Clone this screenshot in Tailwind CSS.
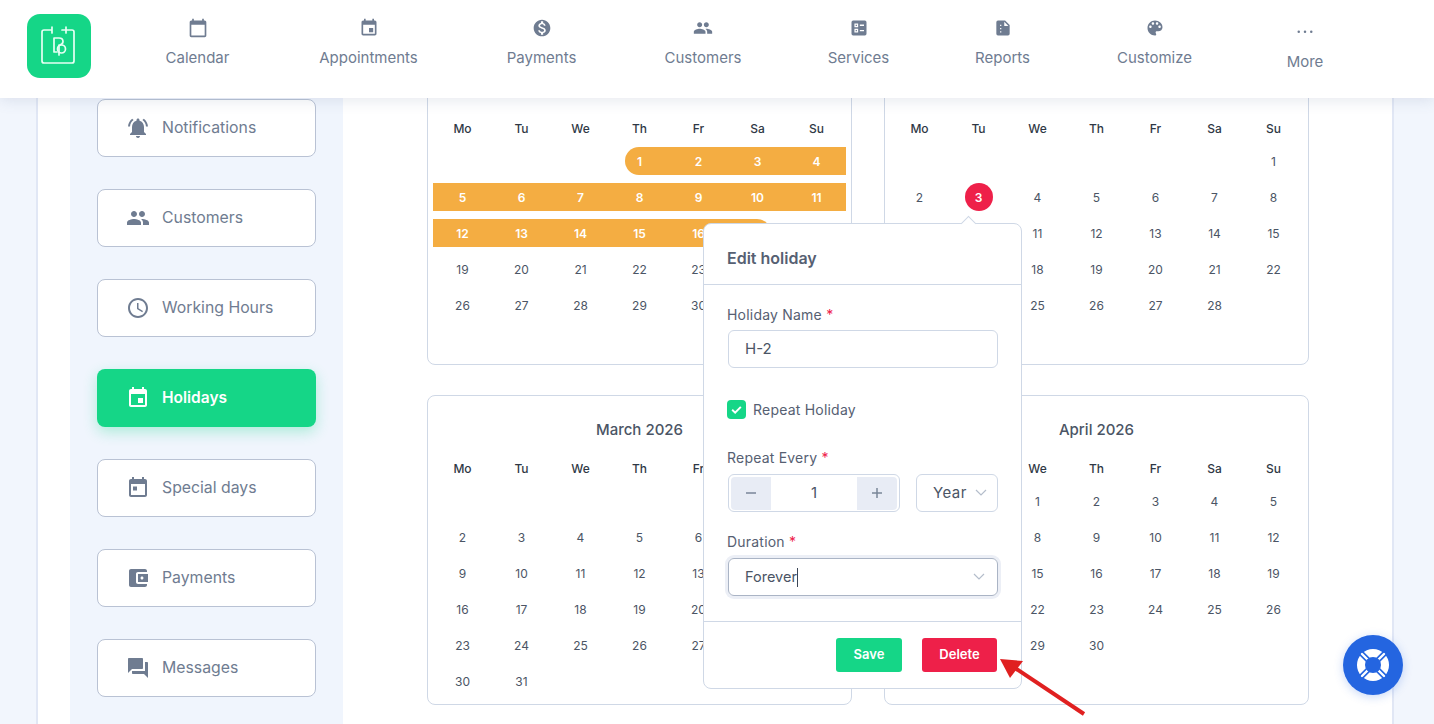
<!DOCTYPE html>
<html lang="en">
<head>
  <meta charset="UTF-8">
  <meta name="viewport" content="width=device-width, initial-scale=1.0">
  <title>Holidays</title>
  <script src="https://cdn.jsdelivr.net/npm/@tailwindcss/browser@4"></script>
</head>
<body class="bg-[#f2f6fd] font-['Inter',sans-serif] h-[724px] overflow-hidden relative">

  <!-- Top navigation -->
  <header class="relative z-30 h-[98px] bg-white shadow-[0_2px_14px_rgba(90,105,140,0.16)] flex pl-[27px] pt-[14px]">
    <div class="w-[64px] h-[64px] rounded-[13px] bg-[#15d687] flex items-center justify-center shrink-0">
      <svg class="w-[40px] h-[44px]" viewBox="0 0 40 44" fill="none" stroke="#e6fff4" stroke-width="1.700" stroke-linecap="round" stroke-linejoin="round">
        <path d="M13 6H5Q3 6 3 8V37Q3 39 5 39H33Q35 39 35 37V8Q35 6 33 6H23M13 3V9M27 3V9"/>
        <path d="M15 28V14H20Q24 14 24 17.500Q24 20 21 21M15 28H18"/><path d="M20 31V21"/><circle cx="22.500" cy="25" r="4"/>
      </svg>
    </div>
    <nav class="flex ml-[29.5px] text-[#6f7c91] text-[15px]">
      <a class="w-[154px] h-[62px] flex flex-col items-center pt-[4px]">
        <svg class="w-5 h-5 fill-[#6f7c91]" viewBox="0 0 24 24"><path d="M20 3h-1V1h-2v2H7V1H5v2H4c-1.100 0-2 .9-2 2v16c0 1.100.9 2 2 2h16c1.100 0 2-.9 2-2V5c0-1.100-.9-2-2-2zm0 18H4V8h16v13z"/></svg>
        <span class="mt-[9px] leading-[22px]">Calendar</span>
      </a>
      <a class="w-[188px] h-[62px] flex flex-col items-center pt-[4px]">
        <svg class="w-5 h-5 fill-[#6f7c91]" viewBox="0 0 24 24"><path d="M17 12h-5v5h5v-5zM16 1v2H8V1H6v2H5c-1.110 0-1.990.9-1.990 2L3 19c0 1.100.89 2 2 2h14c1.100 0 2-.9 2-2V5c0-1.100-.9-2-2-2h-1V1h-2zm3 18H5V8h14v11z"/></svg>
        <span class="mt-[9px] leading-[22px]">Appointments</span>
      </a>
      <a class="w-[158px] h-[62px] flex flex-col items-center pt-[4px]">
        <svg class="w-5 h-5 fill-[#6f7c91]" viewBox="0 0 24 24"><path d="M12 2C6.480 2 2 6.480 2 12s4.480 10 10 10 10-4.480 10-10S17.520 2 12 2zm1.410 16.090V20h-2.670v-1.930c-1.710-.36-3.160-1.460-3.270-3.400h1.960c.1 1.050.82 1.870 2.650 1.870 1.960 0 2.400-.98 2.400-1.590 0-.83-.44-1.610-2.670-2.140-2.480-.6-4.180-1.620-4.180-3.670 0-1.720 1.390-2.840 3.110-3.210V4h2.670v1.950c1.860.45 2.790 1.860 2.850 3.390H14.300c-.05-1.110-.64-1.870-2.220-1.870-1.500 0-2.400.68-2.400 1.640 0 .84.65 1.390 2.670 1.910s4.180 1.390 4.180 3.910c-.01 1.830-1.380 2.830-3.120 3.160z"/></svg>
        <span class="mt-[9px] leading-[22px]">Payments</span>
      </a>
      <a class="w-[165px] h-[62px] flex flex-col items-center pt-[4px]">
        <svg class="w-5 h-5 fill-[#6f7c91]" viewBox="0 0 24 24"><path d="M16 11c1.660 0 2.990-1.340 2.990-3S17.660 5 16 5c-1.660 0-3 1.340-3 3s1.340 3 3 3zm-8 0c1.660 0 2.990-1.340 2.990-3S9.660 5 8 5C6.340 5 5 6.340 5 8s1.340 3 3 3zm0 2c-2.330 0-7 1.170-7 3.500V19h14v-2.500c0-2.330-4.670-3.500-7-3.500zm8 0c-.29 0-.62.02-.97.05 1.160.84 1.970 1.970 1.970 3.450V19h6v-2.500c0-2.330-4.670-3.500-7-3.500z"/></svg>
        <span class="mt-[9px] leading-[22px]">Customers</span>
      </a>
      <a class="w-[146px] h-[62px] flex flex-col items-center pt-[4px]">
        <svg class="w-5 h-5 fill-[#6f7c91]" viewBox="0 0 24 24"><path fill-rule="evenodd" d="M5 3h14a2 2 0 0 1 2 2v14a2 2 0 0 1-2 2H5a2 2 0 0 1-2-2V5a2 2 0 0 1 2-2zm1.500 3.500v4.500h4.500V6.500zm1.500 1.500h1.500v1.500H8zM13 7.800v1.700h5V7.800zM6.500 13v4.500h4.500V13zM8 14.500h1.500V16H8zM13 14.300V16h5v-1.700z"/></svg>
        <span class="mt-[9px] leading-[22px]">Services</span>
      </a>
      <a class="w-[142px] h-[62px] flex flex-col items-center pt-[4px]">
        <svg class="w-5 h-5 fill-[#6f7c91]" viewBox="0 0 24 24"><path fill-rule="evenodd" d="M6 3h8.500L20 8.500V19a2 2 0 0 1-2 2H6a2 2 0 0 1-2-2V5a2 2 0 0 1 2-2zm7.500 1.500V9.500H18.500zM8.500 8v1.500H10V8zM8.500 12v1.500H10V12zM8.500 16v1.500H10V16z"/></svg>
        <span class="mt-[9px] leading-[22px]">Reports</span>
      </a>
      <a class="w-[162px] h-[62px] flex flex-col items-center pt-[4px]">
        <svg class="w-5 h-5 fill-[#6f7c91]" viewBox="0 0 24 24"><path d="M12 3c-4.970 0-9 4.030-9 9s4.030 9 9 9c.83 0 1.500-.67 1.500-1.500 0-.39-.15-.74-.39-1.010-.23-.26-.38-.61-.38-.99 0-.83.67-1.500 1.500-1.500H16c2.760 0 5-2.240 5-5 0-4.420-4.030-8-9-8zm-5.500 9c-.83 0-1.500-.67-1.500-1.500S5.670 9 6.500 9 8 9.670 8 10.500 7.330 12 6.500 12zm3-4C8.670 8 8 7.330 8 6.500S8.670 5 9.500 5s1.500.67 1.500 1.500S10.330 8 9.500 8zm5 0c-.83 0-1.500-.67-1.500-1.500S13.670 5 14.500 5s1.500.67 1.500 1.500S15.330 8 14.500 8zm3 4c-.83 0-1.500-.67-1.500-1.500S16.670 9 17.500 9s1.500.67 1.500 1.500-.67 1.500-1.500 1.500z"/></svg>
        <span class="mt-[9px] leading-[22px]">Customize</span>
      </a>
      <a class="w-[139px] h-[62px] flex flex-col items-center pt-[7px]">
        <svg class="w-5 h-5 fill-[#6f7c91]" viewBox="0 0 24 24"><circle cx="4.500" cy="13" r="1.500"/><circle cx="12" cy="13" r="1.500"/><circle cx="19.500" cy="13" r="1.500"/></svg>
        <span class="mt-[10px] leading-[22px]">More</span>
      </a>
    </nav>
  </header>

  <!-- Page body, scrolled under the header -->
  <main class="relative ml-[36px] w-[1358px] h-[626px] bg-white border-x-2 border-[#e1e7f5] flex overflow-hidden">
    <!-- Settings sidebar -->
    <aside class="ml-[32px] w-[273px] h-full bg-[#f0f5fd] pl-[27px] pt-[1px] flex flex-col gap-[32px] text-[15.8px] text-[#6f7c91] shrink-0">
      <a class="w-[219px] h-[58px] shrink-0 bg-white border border-[#b9c2d4] rounded-lg flex items-center pl-[28px] gap-[12px]">
        <svg class="w-6 h-6 fill-[#6f7c91] shrink-0" viewBox="0 0 24 24"><path d="M7.580 4.080L6.150 2.650C3.750 4.480 2.170 7.300 2.030 10.500h2c.15-2.650 1.510-4.970 3.550-6.420zm12.390 6.420h2c-.15-3.200-1.730-6.020-4.120-7.850l-1.420 1.430c2.020 1.450 3.390 3.770 3.540 6.420zM18 11c0-3.070-1.640-5.640-4.500-6.320V4c0-.83-.67-1.500-1.500-1.500s-1.500.67-1.500 1.500v.68C7.630 5.360 6 7.920 6 11v5l-2 2v1h16v-1l-2-2v-5zm-6 11c.14 0 .27-.01.4-.04.65-.14 1.180-.58 1.440-1.180.1-.24.15-.5.15-.78h-4c.01 1.100.9 2 2.010 2z"/></svg>
        Notifications
      </a>
      <a class="w-[219px] h-[58px] shrink-0 bg-white border border-[#b9c2d4] rounded-lg flex items-center pl-[28px] gap-[12px]">
        <svg class="w-6 h-6 fill-[#6f7c91] shrink-0" viewBox="0 0 24 24"><path d="M16 11c1.660 0 2.990-1.340 2.990-3S17.660 5 16 5c-1.660 0-3 1.340-3 3s1.340 3 3 3zm-8 0c1.660 0 2.990-1.340 2.990-3S9.660 5 8 5C6.340 5 5 6.340 5 8s1.340 3 3 3zm0 2c-2.330 0-7 1.170-7 3.500V19h14v-2.500c0-2.330-4.670-3.500-7-3.500zm8 0c-.29 0-.62.02-.97.05 1.160.84 1.970 1.970 1.970 3.450V19h6v-2.500c0-2.330-4.670-3.500-7-3.500z"/></svg>
        Customers
      </a>
      <a class="w-[219px] h-[58px] shrink-0 bg-white border border-[#b9c2d4] rounded-lg flex items-center pl-[28px] gap-[12px]">
        <svg class="w-6 h-6 fill-[#6f7c91] shrink-0" viewBox="0 0 24 24"><path d="M11.990 2C6.470 2 2 6.480 2 12s4.470 10 9.990 10C17.520 22 22 17.520 22 12S17.520 2 11.990 2zM12 20c-4.420 0-8-3.580-8-8s3.580-8 8-8 8 3.580 8 8-3.580 8-8 8zm.5-13H11v6l5.250 3.150.75-1.230-4.500-2.670z"/></svg>
        Working Hours
      </a>
      <a class="w-[219px] h-[58px] shrink-0 bg-[#15d687] rounded-lg flex items-center pl-[29px] gap-[12px] text-white text-[15.5px] font-semibold shadow-[0_5px_14px_rgba(21,214,135,0.3)]">
        <svg class="w-6 h-6 fill-white shrink-0" viewBox="0 0 24 24"><path d="M17 12h-5v5h5v-5zM16 1v2H8V1H6v2H5c-1.110 0-1.990.9-1.990 2L3 19c0 1.100.89 2 2 2h14c1.100 0 2-.9 2-2V5c0-1.100-.9-2-2-2h-1V1h-2zm3 18H5V8h14v11z"/></svg>
        Holidays
      </a>
      <a class="w-[219px] h-[58px] shrink-0 bg-white border border-[#b9c2d4] rounded-lg flex items-center pl-[28px] gap-[12px]">
        <svg class="w-6 h-6 fill-[#6f7c91] shrink-0" viewBox="0 0 24 24"><path fill-rule="evenodd" d="M8 1v2h8V1h2v2h1c1.100 0 2 .9 2 2v14c0 1.100-.9 2-2 2H5c-1.110 0-2-.9-2-2V5c0-1.100.89-2 2-2h1V1zM5 8v11h14V8zM7 10.500h4v4H7z"/></svg>
        Special days
      </a>
      <a class="w-[219px] h-[58px] shrink-0 bg-white border border-[#b9c2d4] rounded-lg flex items-center pl-[28px] gap-[12px]">
        <svg class="w-6 h-6 fill-[#6f7c91] shrink-0" viewBox="0 0 24 24"><path d="M21 18v1c0 1.100-.9 2-2 2H5c-1.110 0-2-.9-2-2V5c0-1.100.89-2 2-2h14c1.100 0 2 .9 2 2v1h-9c-1.110 0-2 .9-2 2v8c0 1.100.89 2 2 2h9zm-9-2h10V8H12v8zm4-2.500c-.83 0-1.500-.67-1.500-1.500s.67-1.500 1.500-1.500 1.500.67 1.500 1.500-.67 1.500-1.500 1.500z"/></svg>
        Payments
      </a>
      <a class="w-[219px] h-[58px] shrink-0 bg-white border border-[#b9c2d4] rounded-lg flex items-center pl-[28px] gap-[12px]">
        <svg class="w-6 h-6 fill-[#6f7c91] shrink-0" viewBox="0 0 24 24"><path d="M21 6h-2v9H6v2c0 .55.45 1 1 1h11l4 4V7c0-.55-.45-1-1-1zm-4 6V3c0-.55-.45-1-1-1H3c-.55 0-1 .45-1 1v14l4-4h10c.55 0 1-.45 1-1z"/></svg>
        Messages
      </a>
    </aside>

    <!-- Calendars -->
    <section id="calendars" class="ml-[84px] -mt-[43px] grid grid-cols-[425px_425px] gap-x-[32px] gap-y-[30px] content-start"></section>

    <!-- Edit holiday popover -->
    <div class="absolute z-20 left-[665px] top-[125px] w-[319px] h-[466px] bg-white border border-[#cfd8e6] rounded-lg text-[#566072]">
      <div class="absolute -top-[6px] left-[259px] w-[11px] h-[11px] rotate-45 bg-white border-l border-t border-[#cfd8e6]"></div>
      <div class="h-[61px] border-b border-[#cfd8e6] pl-[23px] pt-[22px] text-[16px] leading-[24px] font-semibold">Edit holiday</div>
      <div class="px-[24px] pt-[20px] text-[14px]">
        <label class="block -ml-px leading-[20px] tracking-[0.015em]">Holiday Name <span class="text-[#ee2049]">*</span></label>
        <div class="mt-[5px] h-[38px] w-[270px] border border-[#cfd8e6] rounded-md flex items-center pl-[16px] text-[15px] text-[#4b5565]">H-2</div>
        <div class="mt-[31px] -ml-px flex items-center gap-[7px] h-[20px]">
          <span class="w-[19px] h-[19px] rounded-[4px] bg-[#15d687] flex items-center justify-center">
            <svg class="w-[13px] h-[13px]" viewBox="0 0 24 24" fill="none" stroke="#fff" stroke-width="3.500"><path d="M4 12.500l5.500 5.500L20 7"/></svg>
          </span>
          <span class="tracking-[0.015em]">Repeat Holiday</span>
        </div>
        <label class="block -ml-px mt-[29px] leading-[20px] tracking-[0.015em]">Repeat Every <span class="text-[#ee2049]">*</span></label>
        <div class="mt-[6px] flex gap-[16px] w-[270px]">
          <div class="w-[172px] h-[38px] shrink-0 border border-[#cfd8e6] rounded-md p-[2px] flex items-center justify-between text-[15px] text-[#4b5565]">
            <span class="w-[40px] h-[33px] bg-[#e8ecf5] rounded-l-[4px] flex items-center justify-center">
              <svg class="w-[12px] h-[12px]" viewBox="0 0 12 12" stroke="#7a8698" stroke-width="1.500"><path d="M1 6h10"/></svg>
            </span>
            <span>1</span>
            <span class="w-[40px] h-[33px] bg-[#e8ecf5] rounded-r-[4px] flex items-center justify-center">
              <svg class="w-[12px] h-[12px]" viewBox="0 0 12 12" stroke="#7a8698" stroke-width="1.500"><path d="M1 6h10M6 1v10"/></svg>
            </span>
          </div>
          <div class="w-[82px] h-[38px] shrink-0 border border-[#cfd8e6] rounded-md flex items-center pl-[16px] text-[15px] tracking-[0.03em] text-[#4b5565]">
            Year
            <svg class="w-[12px] h-[8px] ml-[8px]" viewBox="0 0 12 8" fill="none" stroke="#b4bdcb" stroke-width="1.200"><path d="M1 1l5 5 5-5"/></svg>
          </div>
        </div>
        <label class="block -ml-px mt-[20px] leading-[20px] tracking-[0.015em]">Duration <span class="text-[#ee2049]">*</span></label>
        <div class="mt-[6px] h-[38px] w-[270px] border border-[#aab4c5] rounded-md flex items-center pl-[16px] pr-[12px] text-[14.5px] text-[#4b5565] shadow-[0_0_0_3px_#eceff6]">
          Forever<span class="w-px h-[19px] bg-[#3c4656]"></span>
          <svg class="w-[12px] h-[8px] ml-auto" viewBox="0 0 12 8" fill="none" stroke="#b4bdcb" stroke-width="1.200"><path d="M1 1l5 5 5-5"/></svg>
        </div>
      </div>
      <div class="mt-[25px] border-t border-[#cfd8e6] pt-[16px] pr-[24px] flex justify-end gap-[20px] text-[13px] font-semibold text-white">
        <button class="w-[66px] h-[34px] bg-[#15d687] rounded-[3px]">Save</button>
        <button class="w-[75px] h-[34px] bg-[#ee2049] rounded-[3px]">Delete</button>
      </div>
    </div>
  </main>

  <!-- Red annotation arrow -->
  <svg class="absolute z-40 left-[995px] top-[650px] w-[100px] h-[74px]" viewBox="0 0 100 74">
    <path d="M89 64L17 16" stroke="#e02020" stroke-width="4"/>
    <path d="M5 9L28 11L15 28Z" fill="#e02020"/>
  </svg>

  <!-- Help button -->
  <button class="absolute z-40 left-[1343px] top-[635px] w-[60px] h-[60px] rounded-full bg-[#2465e0] shadow-[0_2px_10px_rgba(36,101,224,0.25)] flex items-center justify-center">
    <svg class="w-[34px] h-[34px]" viewBox="0 0 34 34">
      <circle cx="17" cy="17" r="16" fill="#fff"/>
      <path d="M5 5L12 12M29 5L22 12M5 29L12 22M29 29L22 22" stroke="#2465e0" stroke-width="5.500"/>
      <path d="M6 6L12 12M28 6L22 12M6 28L12 22M28 28L22 22" stroke="#fff" stroke-width="2.400" stroke-linecap="round"/>
      <circle cx="17" cy="17" r="8" fill="#2465e0"/>
    </svg>
  </button>

  <script>
    // offset = empty cells before day 1
    const months = [
      { title: 'January 2026', offset: 3, days: 31, holiday: [1, 17] },
      { title: 'February 2026', offset: 6, days: 28, today: 3 },
      { title: 'March 2026', offset: 6, days: 31 },
      { title: 'April 2026', offset: 2, days: 30 }
    ];
    const names = ['Mo', 'Tu', 'We', 'Th', 'Fr', 'Sa', 'Su'];

    // bars and the today circle sit 1px above the row centre, their numbers do not
    function dayCell(m, d) {
      if (m.today === d) {
        return '<div class="h-9 flex items-center justify-center"><span class="w-7 h-7 pt-[2px] -translate-y-px rounded-full bg-[#ee2049] text-white font-semibold flex items-center justify-center">' + d + '</span></div>';
      }
      if (m.holiday && d >= m.holiday[0] && d <= m.holiday[1]) {
        let shape = 'w-full';
        if (d === m.holiday[0]) shape = 'ml-[15px] w-[44px] rounded-l-[14px] pr-[15px]';
        if (d === m.holiday[1]) shape = 'w-[43px] rounded-r-[14px] pl-[15px]';
        return '<div class="h-9 flex items-center"><span class="h-7 pt-[2px] -translate-y-px bg-[#f4ad42] text-white font-semibold flex items-center justify-center ' + shape + '">' + d + '</span></div>';
      }
      return '<div class="h-9 flex items-center justify-center">' + d + '</div>';
    }

    document.getElementById('calendars').innerHTML = months.map(m => {
      let cells = '';
      for (let i = 0; i < m.offset; i++) cells += '<div class="h-9"></div>';
      for (let d = 1; d <= m.days; d++) cells += dayCell(m, d);
      return '<div class="h-[310px] w-[425px] bg-white border border-[#cfd8e6] rounded-lg px-[5px] pt-[23px]">'
        + '<div class="h-[22px] leading-[22px] text-center text-[15px] font-medium text-[#4b5565]">' + m.title + '</div>'
        + '<div class="mt-[18px] h-[20px] grid grid-cols-7 text-center text-[12px] leading-[20px] font-medium text-[#2f3845] font-[\'Noto_Sans\',sans-serif]">'
        + names.map(n => '<div>' + n + '</div>').join('') + '</div>'
        + '<div class="mt-[5px] grid grid-cols-7 text-[12px] text-[#4b5565] font-[\'Noto_Sans\',sans-serif]">' + cells + '</div>'
        + '</div>';
    }).join('');
  </script>
</body>
</html>
